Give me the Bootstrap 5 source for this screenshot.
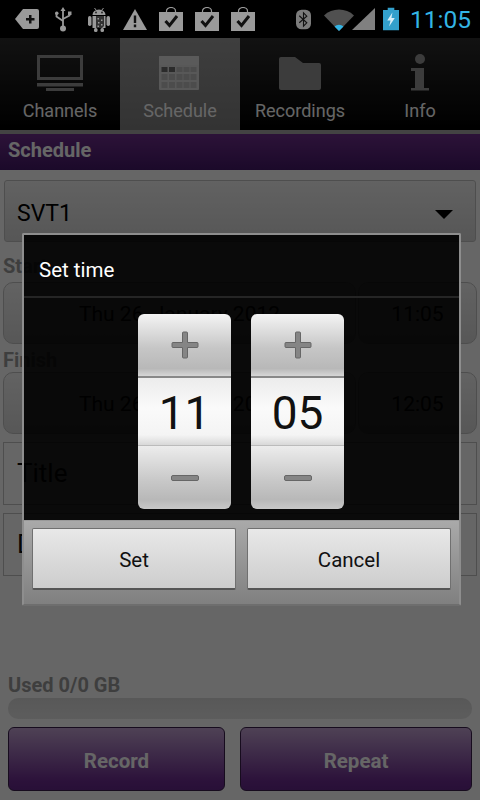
<!DOCTYPE html>
<html lang="en">
<head>
<meta charset="UTF-8">
<meta name="viewport" content="width=device-width, initial-scale=1">
<title>Schedule</title>
<link href="https://cdn.jsdelivr.net/npm/bootstrap@5.3.0/dist/css/bootstrap.min.css" rel="stylesheet">
<style>
html, body { margin: 0; background: #000; }
.phone { position: relative; width: 480px; height: 800px; overflow: hidden; background: #fff; font-family: Roboto, "Liberation Sans", sans-serif; color: #000; }
.status-bar { height: 38px; background: #000; padding: 0 9px 0 9px; }
.status-slot { width: 36px; height: 38px; }
.status-clock { color: #33b5e5; font-size: 24.500px; width: 61px; margin-left: 11px; line-height: 41px; }
.tab-strip { height: 96px; background: linear-gradient(#2e2e2e, #000 92px); border-bottom: 4px solid #a8a8a8; }
.tab-item { width: 120px; color: #fff; font-size: 18px; line-height: 22px; padding-top: 15px; }
.tab-item svg { display: block; margin: 0 auto 9px; height: 38px; }
.tab-active { background: linear-gradient(#9c9c9c, #808080); }
.tab-active svg { transform: translateX(-1px); }
.page-head { height: 36px; background: linear-gradient(#6f2f8d, #441868); color: #fff; font-size: 20px; font-weight: 700; line-height: 32px; padding-left: 8px; }
.form-area { padding: 10px 3px 9px; flex: 1 1 auto; min-height: 0; }
.spin-box { height: 62px; margin: 0 1px; padding: 6px 13px 0 12px; border: 1px solid #c4c4c4; border-radius: 3px; background: linear-gradient(#f4f4f4, #d8d8d8); font-size: 23px; }
.spin-arrow { width: 0; height: 0; border-left: 9px solid transparent; border-right: 9px solid transparent; border-top: 9px solid #000; margin-right: 9px; }
.field-label { color: #9c9c9c; font-weight: 700; font-size: 20px; line-height: 24px; }
.date-row { height: 62px; gap: 2px; }
.date-btn { background: linear-gradient(#f6f6f6, #dadada); border: 1px solid #c4c4c4; border-radius: 10px; font-size: 21px; padding-top: 3px; }
.date-main { width: 353px; }
.text-row { height: 63px; padding-left: 13px; border: 1px solid #c4c4c4; background: transparent; font-size: 26px; color: #111; }
.used-label { color: #9c9c9c; font-weight: 700; font-size: 20px; line-height: 24px; padding-left: 5px; margin-top: auto; }
.used-bar { height: 21px; margin: 1px 5px 8px; border-radius: 10px; background: linear-gradient(#dcdcdc, #e8e8e8); }
.action-btn { height: 64px; padding-top: 10px; border: 1px solid #3a1f4c; border-radius: 6px; background: linear-gradient(#c4a4d4 0, #6e2d92 85%, #64288a 100%); color: #fff; font-weight: 700; font-size: 20.500px; }
.act-left { width: 217px; margin-left: 5px; }
.act-right { width: 232px; margin-left: 15px; }
.dim-layer { position: absolute; left: 0; right: 0; top: 38px; bottom: 0; background: rgba(0,0,0,.6); }
.time-dialog { position: absolute; left: 22px; top: 233px; width: 439px; height: 373px; border: 2px solid #8e8e8e; border-bottom-color: #6e6e6e; border-radius: 2px; background: rgba(0,0,0,.9); }
.dialog-title { height: 63px; color: #fff; font-size: 20.500px; line-height: 70px; padding-left: 15px; border-bottom: 2px solid #252525; }
.dialog-body { height: 222px; padding: 16px 1px 0 0; gap: 20px; }
.wheel { width: 93px; height: 195px; border-radius: 6px; overflow: hidden; }
.wheel-step { height: 62px; background: linear-gradient(#f4f4f4, #c6c6c6 55%, #b8b8b8 88%, #d6d6d6); }
.wheel-step.wheel-down { height: 63px; background: linear-gradient(#ececec, #c8c8c8 55%, #b8b8b8 85%, #c8c8c8); }
.wheel-value { height: 70px; padding-top: 3px; background: linear-gradient(#ececec, #fafafa 45%, #f4f4f4 85%, #d8d8d8); border-top: 2px solid #888; border-bottom: 1px solid #bbb; font-size: 46px; color: #111; }
.dialog-foot { height: 84px; padding: 7px 8px 0 8px; gap: 11px; background: linear-gradient(#a9a9a9, #808080); border-top: 1px solid #999; }
.foot-btn { width: 204px; height: 62px; padding: 4px 0 0; border: 1px solid #707070; border-bottom: 2px solid #555; border-radius: 2px; background: linear-gradient(#e8e8e8, #cdcdcd); color: #111; font-size: 20.500px; }
.foot-btn:hover { background: linear-gradient(#e8e8e8, #cdcdcd); color: #111; border-color: #707070; }
</style>
</head>
<body>
<div class="phone d-flex flex-column">
    <div class="status-bar d-flex justify-content-between align-items-center">
        <div class="d-flex">
            <div class="status-slot d-flex align-items-center justify-content-center">
                <svg width="24" height="20" viewBox="0 0 24 20"><path d="M8 0H22a2 2 0 0 1 2 2V18a2 2 0 0 1-2 2H8L0 10Z" fill="#9a9a9a"/><path d="M11 9h3V6h2.500v3h3v2.500h-3v3H14v-3h-3Z" fill="#111"/></svg>
            </div>
            <div class="status-slot d-flex align-items-center justify-content-center">
                <svg width="18" height="25" viewBox="0 0 18 25"><g stroke="#9a9a9a" stroke-width="1.800" fill="none"><path d="M9 3V20"/><path d="M2.500 7v2.500L9 14"/><path d="M15.500 7v1.500L9 12"/></g><path d="M9 0l2.500 4h-5Z" fill="#9a9a9a"/><circle cx="9" cy="21.500" r="3" fill="#9a9a9a"/><rect x="1" y="4.500" width="3.500" height="3.500" rx="1.700" fill="#9a9a9a"/><rect x="14" y="4.500" width="3.500" height="3.500" fill="#9a9a9a"/></svg>
            </div>
            <div class="status-slot d-flex align-items-center justify-content-center">
                <svg width="22" height="25" viewBox="0 0 22 25"><path d="M6.500 1l2 2.500h5L15.500 1" stroke="#9a9a9a" fill="none"/><path d="M4.500 8a6.500 5.500 0 0 1 13 0Z" fill="#9a9a9a"/><rect x="0" y="9" width="3.500" height="10" rx="1.700" fill="#9a9a9a"/><rect x="18.500" y="9" width="3.500" height="10" rx="1.700" fill="#9a9a9a"/><rect x="4.500" y="9" width="13" height="12" fill="#9a9a9a"/><rect x="6" y="21" width="3.500" height="4" rx="1.500" fill="#9a9a9a"/><rect x="12.500" y="21" width="3.500" height="4" rx="1.500" fill="#9a9a9a"/><path d="M8 9h8v10l-2 2H8Z" fill="#333"/><g fill="#999"><rect x="9.500" y="11" width="1.500" height="1.500"/><rect x="13" y="12.500" width="1.500" height="1.500"/><rect x="10" y="15" width="1.500" height="1.500"/><rect x="13" y="17" width="1.500" height="1.500"/><rect x="9.500" y="18.500" width="1.500" height="1.500"/></g><circle cx="8" cy="5.500" r=".9" fill="#222"/><circle cx="14" cy="5.500" r=".9" fill="#222"/></svg>
            </div>
            <div class="status-slot d-flex align-items-center justify-content-center">
                <svg width="24" height="21" viewBox="0 0 24 21"><path d="M12 0L24 21H0Z" fill="#9a9a9a"/><path d="M10.800 6.500h2.400v7.500h-2.400ZM10.800 15.500h2.400v2.700h-2.400Z" fill="#111"/></svg>
            </div>
            <div class="status-slot d-flex align-items-center justify-content-center">
                <svg width="24" height="24" viewBox="0 0 24 24"><path d="M7.500 6V4a4.500 3.500 0 0 1 9 0v2" stroke="#9a9a9a" stroke-width="1.200" fill="none"/><rect y="5" width="24" height="19" fill="#9a9a9a"/><path d="M6.500 14l4 4.500L18 9" stroke="#111" stroke-width="3" fill="none"/></svg>
            </div>
            <div class="status-slot d-flex align-items-center justify-content-center">
                <svg width="24" height="24" viewBox="0 0 24 24"><path d="M7.500 6V4a4.500 3.500 0 0 1 9 0v2" stroke="#9a9a9a" stroke-width="1.200" fill="none"/><rect y="5" width="24" height="19" fill="#9a9a9a"/><path d="M6.500 14l4 4.500L18 9" stroke="#111" stroke-width="3" fill="none"/></svg>
            </div>
            <div class="status-slot d-flex align-items-center justify-content-center">
                <svg width="24" height="24" viewBox="0 0 24 24"><path d="M7.500 6V4a4.500 3.500 0 0 1 9 0v2" stroke="#9a9a9a" stroke-width="1.200" fill="none"/><rect y="5" width="24" height="19" fill="#9a9a9a"/><path d="M6.500 14l4 4.500L18 9" stroke="#111" stroke-width="3" fill="none"/></svg>
            </div>
        </div>
        <div class="d-flex align-items-center">
            <svg width="15" height="21" viewBox="0 0 16 21" class="me-2"><rect width="16" height="21" rx="6" fill="#7c7c7c"/><path d="M3.500 6.500L11.500 14 8 17.500V3.500l3.500 3.500L3.500 14" stroke="#111" stroke-width="1.200" fill="none"/></svg>
            <svg width="52" height="24" viewBox="0 0 52 24" class="ms-1"><path d="M1 8.500A22 22 0 0 1 31 8.500L16 24Z" fill="#505050"/><path d="M11.500 19.500a7 7 0 0 1 9 0L16 24Z" fill="#33b5e5"/><path d="M29 23L52 1V23Z" fill="#808080"/></svg>
            <svg width="16" height="24" viewBox="0 0 17 24" class="ms-2"><path d="M5 0h7v2.500h5V24H0V2.500h5Z" fill="#33a0cc"/><path d="M10 5L4.500 13.500h3.500L6.500 20l6-9H9Z" fill="#d8eef8"/></svg>
            <div class="status-clock">11:05</div>
        </div>
    </div>

    <div class="tab-strip d-flex flex-shrink-0">
        <div class="tab-item text-center">
            <svg width="46" height="38" viewBox="0 0 46 38"><path d="M0 2h46v25H0Z M3 5v19h40V5Z" fill="#969696" fill-rule="evenodd"/><rect y="30" width="46" height="3.500" fill="#969696"/><rect x="9" y="35" width="28" height="3" fill="#969696"/></svg>
            Channels
        </div>
        <div class="tab-item tab-active text-center">
            <svg width="40" height="38" viewBox="0 0 40 38"><rect y="3" width="40" height="34" rx="1" fill="#dcdcdc"/><rect y="3" width="40" height="9" rx="1" fill="#e2e2e2"/><g fill="#bdbdbd"><rect x="2.500" y="14" width="6" height="5" fill="#6c6c6c"/><rect x="10" y="14" width="6" height="5" fill="#6c6c6c"/><rect x="17.500" y="14" width="6" height="5"/><rect x="24.500" y="14" width="6" height="5"/><rect x="31.500" y="14" width="6" height="5"/><rect x="2.500" y="21" width="6" height="6"/><rect x="10" y="21" width="6" height="6"/><rect x="17.500" y="21" width="6" height="6"/><rect x="24.500" y="21" width="6" height="6"/><rect x="31.500" y="21" width="6" height="6"/><rect x="2.500" y="29" width="6" height="6"/><rect x="10" y="29" width="6" height="6"/><rect x="17.500" y="29" width="6" height="6"/><rect x="24.500" y="29" width="6" height="6"/><rect x="31.500" y="29" width="6" height="6"/></g></svg>
            Schedule
        </div>
        <div class="tab-item text-center">
            <svg width="42" height="38" viewBox="0 0 42 38"><path d="M2 4h14l8 6h16a2 2 0 0 1 2 2v23a2 2 0 0 1-2 2H2a2 2 0 0 1-2-2V6a2 2 0 0 1 2-2Z" fill="#969696"/></svg>
            Recordings
        </div>
        <div class="tab-item text-center">
            <svg width="18" height="38" viewBox="0 0 18 38"><circle cx="9" cy="6" r="5" fill="#969696"/><path d="M0 15h13v20h5v2.500H0V35h4V18H0Z" fill="#969696"/></svg>
            Info
        </div>
    </div>
    <div class="page-head flex-shrink-0">Schedule</div>

    <div class="form-area d-flex flex-column">
        <div class="spin-box d-flex align-items-center justify-content-between flex-shrink-0">
            <span>SVT1</span>
            <span class="spin-arrow"></span>
        </div>
        <div class="field-label mt-2 pt-1">Start</div>
        <div class="date-row d-flex flex-shrink-0 mt-1">
            <div class="date-btn date-main d-flex align-items-center justify-content-center">Thu 26, January 2012</div>
            <div class="date-btn d-flex align-items-center justify-content-center flex-fill">11:05</div>
        </div>
        <div class="field-label mt-1">Finish</div>
        <div class="date-row d-flex flex-shrink-0">
            <div class="date-btn date-main d-flex align-items-center justify-content-center">Thu 26, January 2012</div>
            <div class="date-btn d-flex align-items-center justify-content-center flex-fill">12:05</div>
        </div>
        <div class="text-row d-flex align-items-center flex-shrink-0 mt-2">Title</div>
        <div class="text-row d-flex align-items-center flex-shrink-0 mt-2">Description</div>
        <div class="used-label">Used 0/0 GB</div>
        <div class="used-bar progress flex-shrink-0"></div>
        <div class="d-flex flex-shrink-0">
            <button type="button" class="btn action-btn act-left">Record</button>
            <button type="button" class="btn action-btn act-right">Repeat</button>
        </div>
    </div>

    <div class="dim-layer"></div>

    <div class="time-dialog">
        <div class="dialog-title">Set time</div>
        <div class="dialog-body d-flex justify-content-center">
            <div class="wheel d-flex flex-column">
                <div class="wheel-step d-flex align-items-center justify-content-center">
                    <svg width="28" height="28" viewBox="0 0 28 28"><path d="M11.500 2a1 1 0 0 1 1-1h3a1 1 0 0 1 1 1v9.500H26a1 1 0 0 1 1 1v3a1 1 0 0 1-1 1H16.500V26a1 1 0 0 1-1 1h-3a1 1 0 0 1-1-1V16.500H2a1 1 0 0 1-1-1v-3a1 1 0 0 1 1-1h9.500Z" fill="#858585" stroke="#666"/></svg>
                </div>
                <div class="wheel-value d-flex align-items-center justify-content-center">11</div>
                <div class="wheel-step wheel-down d-flex align-items-center justify-content-center">
                    <svg width="28" height="6" viewBox="0 0 28 6"><rect x=".5" y=".5" width="27" height="5" rx="1.500" fill="#858585" stroke="#666"/></svg>
                </div>
            </div>
            <div class="wheel d-flex flex-column">
                <div class="wheel-step d-flex align-items-center justify-content-center">
                    <svg width="28" height="28" viewBox="0 0 28 28"><path d="M11.500 2a1 1 0 0 1 1-1h3a1 1 0 0 1 1 1v9.500H26a1 1 0 0 1 1 1v3a1 1 0 0 1-1 1H16.500V26a1 1 0 0 1-1 1h-3a1 1 0 0 1-1-1V16.500H2a1 1 0 0 1-1-1v-3a1 1 0 0 1 1-1h9.500Z" fill="#858585" stroke="#666"/></svg>
                </div>
                <div class="wheel-value d-flex align-items-center justify-content-center">05</div>
                <div class="wheel-step wheel-down d-flex align-items-center justify-content-center">
                    <svg width="28" height="6" viewBox="0 0 28 6"><rect x=".5" y=".5" width="27" height="5" rx="1.500" fill="#858585" stroke="#666"/></svg>
                </div>
            </div>
        </div>
        <div class="dialog-foot d-flex">
            <button type="button" class="btn foot-btn">Set</button>
            <button type="button" class="btn foot-btn">Cancel</button>
        </div>
    </div>
</div>
<script src="https://cdn.jsdelivr.net/npm/bootstrap@5.3.0/dist/js/bootstrap.bundle.min.js"></script>
</body>
</html>
